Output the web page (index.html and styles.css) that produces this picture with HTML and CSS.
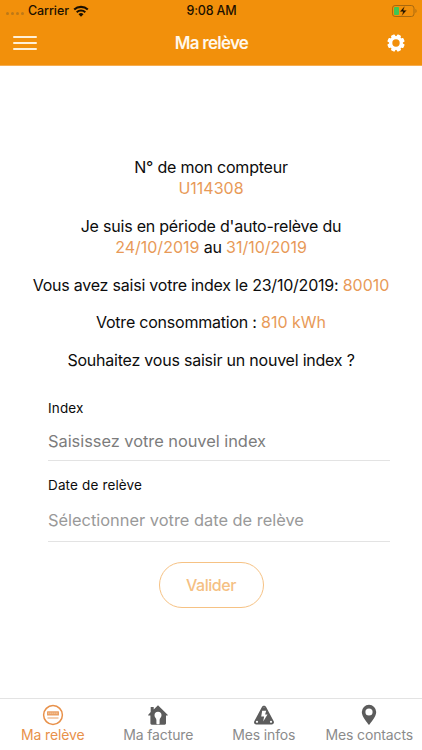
FILE: index.html
```html
<!DOCTYPE html>
<html lang="fr">
<head>
<meta charset="utf-8">
<meta name="viewport" content="width=device-width, initial-scale=1">
<title>Ma relève</title>
<link rel="stylesheet" href="styles.css">
</head>
<body>
<div class="app">
  <header class="header">
    <div class="status">
      <div class="status-left">
        <span class="dots"><i></i><i></i><i></i><i></i></span>
        <span class="carrier">Carrier</span>
        <svg class="wifi" viewBox="0 0 16 12" width="16" height="12">
          <path d="M1.2 4.600a9.800 9.800 0 0 1 13.600 0" fill="none" stroke="#1c1000" stroke-width="2.100"/>
          <path d="M3.700 7.200a6.200 6.200 0 0 1 8.600 0" fill="none" stroke="#1c1000" stroke-width="2"/>
          <path d="M8 11.800L5.500 9.200a3.600 3.600 0 0 1 5 0z" fill="#1c1000"/>
        </svg>
      </div>
      <span class="clock">9:08 AM</span>
      <svg class="battery" viewBox="0 0 26 12" width="26" height="12">
        <rect x=".5" y=".5" width="21.500" height="11" rx="2.600" fill="none" stroke="#a8690f"/>
        <rect x="2" y="2" width="5" height="8" rx="1" fill="#3fc653"/>
        <path d="M23.500 4v4c1.300-.4 1.300-3.600 0-4z" fill="#a8690f"/>
        <path d="M12.700 1L7.800 6.800h3.200L9.600 11l5.200-5.800h-3.300z" fill="#150c00" stroke="#f2900b" stroke-width=".4"/>
      </svg>
    </div>
    <div class="toolbar">
      <div class="menu"><i></i><i></i><i></i></div>
      <h1 class="title">Ma relève</h1>
      <svg class="gear" viewBox="0 0 18 18" width="18" height="18">
        <g fill="#fff">
          <rect x="6.900" y=".3" width="4.200" height="17.400" rx="1" transform="rotate(22.500 9 9)"/>
          <rect x="6.900" y=".3" width="4.200" height="17.400" rx="1" transform="rotate(67.500 9 9)"/>
          <rect x="6.900" y=".3" width="4.200" height="17.400" rx="1" transform="rotate(112.500 9 9)"/>
          <rect x="6.900" y=".3" width="4.200" height="17.400" rx="1" transform="rotate(157.500 9 9)"/>
          <circle cx="9" cy="9" r="7"/>
        </g>
        <circle cx="9" cy="9" r="3.700" fill="#f2900b"/>
      </svg>
    </div>
  </header>

  <main class="content">
    <p>N° de mon compteur<br><span class="value">U114308</span></p>
    <p>Je suis en période d'auto-relève du<br><span class="value">24/10/2019</span> au <span class="value">31/10/2019</span></p>
    <p>Vous avez saisi votre index le 23/10/2019: <span class="value">80010</span></p>
    <p>Votre consommation : <span class="value">810 kWh</span></p>
    <p>Souhaitez vous saisir un nouvel index ?</p>

    <div class="form">
      <div class="field field-index">
        <span class="label">Index</span>
        <span class="input">Saisissez votre nouvel index</span>
      </div>
      <div class="field field-date">
        <span class="label">Date de relève</span>
        <span class="input">Sélectionner votre date de relève</span>
      </div>
    </div>
    <button class="submit" type="button">Valider</button>
  </main>

  <nav class="tabs">
    <div class="tab active">
      <svg viewBox="0 0 22 22" width="22" height="22">
        <circle cx="11" cy="11" r="9.400" fill="none" stroke="#e8914a" stroke-width="1.500"/>
        <rect x="5" y="7.200" width="12" height="4.200" rx=".5" fill="#eaa064"/>
        <path d="M6.300 9.300h9.500" stroke="#f5c9a3" stroke-width="1.600" stroke-dasharray="1.100 .9"/>
        <path d="M5.500 14h11" stroke="#eaa064" stroke-width="1"/>
      </svg>
      <span>Ma relève</span>
    </div>
    <div class="tab">
      <svg viewBox="0 0 22 22" width="22" height="22">
        <path d="M11 1.300L20.600 10.700c.4.500.1.900-.4.900H19v7.700c0 .9-.5 1.400-1.400 1.400H4.800c-.9 0-1.400-.5-1.400-1.400v-7.700H1.700c-.6 0-.8-.5-.4-.9L3.700 8V3.100h3v2.300z" fill="#5c5c5c"/>
        <path d="M11 7.800a3.500 3.500 0 0 0-3.500 3.500c0 2.200 1.900 2.800 1.900 4.700v3.200c0 .7.300 1.100.7 1.100h1.800c.4 0 .7-.4.700-1.100V16c0-1.900 1.900-2.500 1.900-4.700A3.500 3.500 0 0 0 11 7.800z" fill="#fff"/>
      </svg>
      <span>Ma facture</span>
    </div>
    <div class="tab">
      <svg viewBox="0 0 22 22" width="22" height="22">
        <path d="M8.900 2.900c.9-1.700 3.300-1.700 4.200 0l7.600 14.300c.8 1.600-.2 3.400-2 3.400H3.300c-1.800 0-2.800-1.800-2-3.400z" fill="#5c5c5c"/>
        <path d="M9.200 6.800h4l-1.100 3.600h2.400L10.200 17.400l.9-4.900H8.200z" fill="#fff"/>
        <circle cx="4" cy="17.800" r="1.100" fill="#fff"/><circle cx="18" cy="17.800" r="1.100" fill="#fff"/><circle cx="11" cy="3.600" r=".6" fill="#999"/>
      </svg>
      <span>Mes infos</span>
    </div>
    <div class="tab">
      <svg viewBox="0 0 22 22" width="22" height="22">
        <path fill-rule="evenodd" d="M11 .8a7.200 7.200 0 0 0-7.200 7.200c0 4.800 5.300 10.400 7.200 13 1.900-2.600 7.200-8.200 7.200-13A7.200 7.200 0 0 0 11 .8zm0 3.600a3.600 3.600 0 1 1 0 7.200 3.600 3.600 0 0 1 0-7.200z" fill="#5c5c5c"/>
      </svg>
      <span>Mes contacts</span>
    </div>
  </nav>
</div>
</body>
</html>
```
FILE: styles.css
```css
* { box-sizing: border-box; }
body { margin: 0; background: #fff; color: #0c0c0c; font-family: Inter, "Liberation Sans", sans-serif; }
.app { width: 422px; height: 750px; display: flex; flex-direction: column; overflow: hidden; }

.header { height: 66px; background: #f2900b; border-bottom: 1px solid #f6ad50; flex: none; }
.status { height: 21px; display: grid; grid-template-columns: 1fr auto 1fr; align-items: center; padding: 0 5px 0 6px; color: #1c1000; font-size: 12.5px; font-weight: 500; }
.status-left { display: flex; align-items: center; }
.dots { display: flex; gap: 2px; padding-top: 6px; }
.dots i { width: 3px; height: 3px; border-radius: 50%; background: #bd7917; }
.carrier { margin-left: 4px; width: 42px; white-space: nowrap; letter-spacing: -.1px; }
.wifi { margin-left: 3px; }
.clock { letter-spacing: -.15px; }
.battery { justify-self: end; margin-right: -1px; }
.toolbar { height: 44px; display: grid; grid-template-columns: 1fr auto 1fr; align-items: center; padding: 0 17px 0 13px; }
.menu { width: 24px; display: flex; flex-direction: column; gap: 4px; }
.menu i { height: 2px; background: #fff0d8; border-radius: 1px; }
.title { margin: 0; padding-left: 5px; color: #fff8ec; font-size: 17px; line-height: 22px; font-weight: 600; letter-spacing: -.75px; }
.gear { justify-self: end; }

.content { flex: 1; padding-top: 90.5px; display: flex; flex-direction: column; align-items: center; }
.content p { margin: 0 0 16px; text-align: center; font-size: 16px; line-height: 21.5px; letter-spacing: -.22px; white-space: nowrap; }
.content .value { color: #e89a58; letter-spacing: 0; }

.form { width: 342px; margin-left: 16px; margin-top: 12.5px; }
.field { display: flex; flex-direction: column; border-bottom: 1px solid #e3e3e3; }
.label { font-size: 13.5px; line-height: 16px; letter-spacing: .15px; }
.input { font-size: 16.4px; line-height: 22px; color: #7c7c7c; }
.field-index { height: 61px; }
.field-index .input { margin-top: 14px; letter-spacing: -.03px; }
.field-date { height: 81px; padding-top: 16px; }
.field-date .input { margin-top: 16px; color: #999; }
.submit { margin-top: 20px; width: 105px; height: 46px; border: 1px solid #f6c284; border-radius: 23px; background: #fff; color: #f5c083; font: 500 16px Inter, "Liberation Sans", sans-serif; letter-spacing: -.45px; padding: 0; }

.tabs { height: 52px; flex: none; display: grid; grid-template-columns: repeat(4, 1fr); border-top: 1px solid #e3e3e3; }
.tab { display: flex; flex-direction: column; align-items: center; padding-top: 5px; color: #8b8b8b; font-size: 14px; line-height: 18px; letter-spacing: -.13px; white-space: nowrap; }
.tab svg { display: block; }
.active { color: #e8914a; }
```
